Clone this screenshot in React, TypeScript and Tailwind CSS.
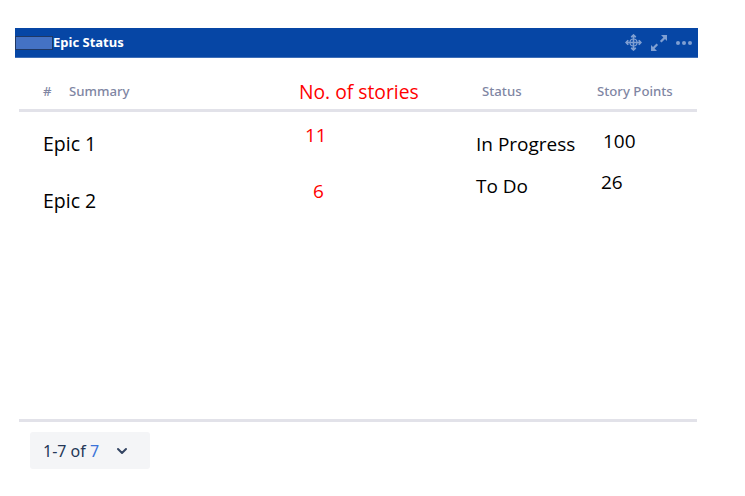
import { ChevronDown } from 'lucide-react';

const columns = [
  { width: 'w-[262px]', pad: 'pt-[20px] pl-[24px]', gap: 'gap-[33px]', color: 'text-black', size: 'text-[19.5px]', items: [{ label: 'Epic 1' }, { label: 'Epic 2' }] },
  { width: 'w-[195px]', pad: 'pt-[11px] pl-[24px]', gap: 'gap-[32px]', color: 'text-[#ff0000]', size: 'text-[19px]', items: [{ label: '11' }, { label: '6', indent: 'ml-[8px]' }] },
  { width: 'w-[125px]', pad: 'pt-[20px]', gap: 'gap-[18px]', color: 'text-black', size: 'text-[19px]', items: [{ label: 'In Progress' }, { label: 'To Do' }] },
  { width: 'w-[76px]', pad: 'pt-[17px]', gap: 'gap-[17px]', color: 'text-black', size: 'text-[19px]', items: [{ label: '100', indent: 'ml-[2px]' }, { label: '26' }] },
];

function MoveIcon() {
  return (
    <svg width="17" height="17" viewBox="0 0 17 17" fill="none" stroke="#7f9fd2" strokeWidth="1.6">
      <path d="M8.500 1v15M1 8.500h15" />
      <path d="M6.200 3.200 8.500 1l2.300 2.200M6.200 13.800 8.500 16l2.300-2.200M3.200 6.200 1 8.500l2.200 2.300M13.800 6.200 16 8.500l-2.200 2.300" fill="#7f9fd2" />
      <circle cx="8.500" cy="8.500" r="3.500" strokeWidth="1.200" />
    </svg>
  );
}

function ExpandIcon() {
  return (
    <svg width="18" height="18" viewBox="0 0 18 18" fill="#7f9fd2">
      <path d="M11 1h6v6l-2-2-3.500 3.500-1.600-1.600L13.400 3.400zM7 17H1v-6l2 2 3.500-3.500 1.600 1.600L4.600 14.600z" />
    </svg>
  );
}

export default function App() {
  return (
    <div className="w-[745px] h-[496px] bg-white pt-[28px] pl-[15px] font-['Open_Sans','Noto_Sans',sans-serif] overflow-hidden">
      <div className="w-[683px] h-[30px] bg-[#0646a5] border-b border-[#3f6fb8] flex items-center justify-between">
        <div className="flex items-center">
          <div className="w-[38px] h-[14px] bg-[#4472c4] border border-[#1f3864]" />
          <span className="text-[13px] font-bold text-white leading-none font-['Noto_Sans',sans-serif]">Epic Status</span>
        </div>
        <div className="flex items-center gap-[8px] pr-[6px]">
          <MoveIcon />
          <ExpandIcon />
          <div className="flex gap-[2px]">
            <span className="w-[4px] h-[4px] rounded-full bg-[#7f9fd2]" />
            <span className="w-[4px] h-[4px] rounded-full bg-[#7f9fd2]" />
            <span className="w-[4px] h-[4px] rounded-full bg-[#7f9fd2]" />
          </div>
        </div>
      </div>

      <div className="ml-[4px] w-[678px]">
        <div className="h-[54px] flex items-end border-b-[3px] border-[#e2e2e9] pb-[9px] text-[13.2px] leading-[18px] font-medium text-[#7f86a3] font-['Noto_Sans',sans-serif]">
          <span className="w-[26px] ml-[24px]">#</span>
          <span className="w-[230px]">Summary</span>
          <span className="w-[183px] -mb-[4px] text-[19.3px] leading-[24px] font-normal text-[#ff0000] font-['Open_Sans',sans-serif]">No. of stories</span>
          <span className="w-[115px]">Status</span>
          <span>Story Points</span>
        </div>

        <div className="h-[310px] flex border-b-[3px] border-[#e2e2e9] leading-[24px]">
          {columns.map(col => (
            <div key={col.items[0].label} className={`flex flex-col ${col.width} ${col.pad} ${col.gap} ${col.color} ${col.size}`}>
              {col.items.map(item => (
                <span key={item.label} className={item.indent}>{item.label}</span>
              ))}
            </div>
          ))}
        </div>

        <div className="mt-[10px] ml-[11px] w-[120px] h-[37px] rounded-[3px] bg-[#f4f5f7] flex items-center pl-[13px] text-[16px] text-[#253858] font-['Noto_Sans',sans-serif]">
          <span className="w-[71px]">
            1-7 of <span className="text-[#3b73d9]">7</span>
          </span>
          <ChevronDown size={16} strokeWidth={3} className="text-[#344563]" />
        </div>
      </div>
    </div>
  );
}
